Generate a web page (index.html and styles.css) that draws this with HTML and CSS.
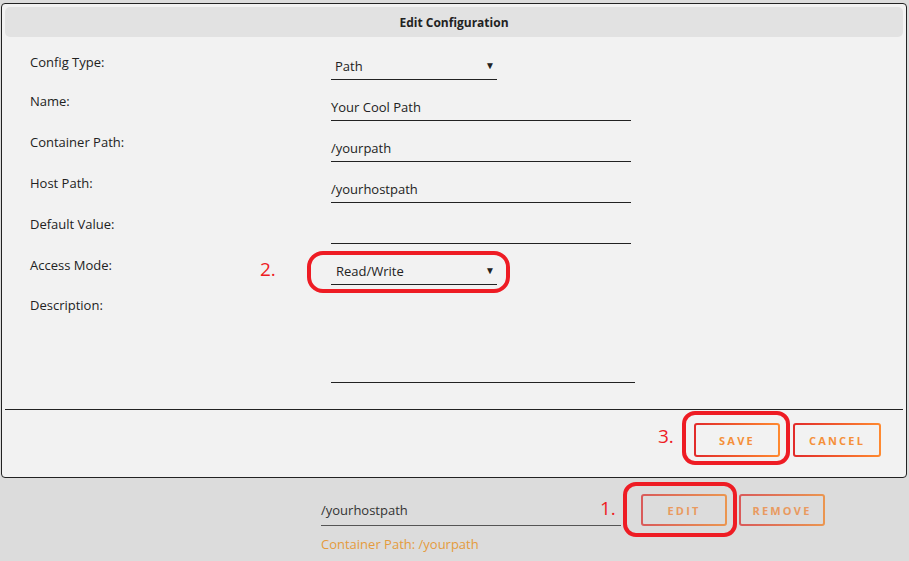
FILE: index.html
```html
<!DOCTYPE html>
<html lang="en">
<head>
    <meta charset="UTF-8">
    <title>Edit Configuration</title>
    <link rel="stylesheet" href="styles.css">
</head>
<body>
    <div class="page">
        <div class="modal">
            <div class="modal-header">Edit Configuration</div>

            <div class="form">
                <div class="form-row">
                    <label class="form-label">Config Type:</label>
                    <div class="select short">
                        <span>Path</span>
                        <span class="arrow">&#9660;</span>
                    </div>
                </div>
                <div class="form-row">
                    <label class="form-label">Name:</label>
                    <div class="text-input">Your Cool Path</div>
                </div>
                <div class="form-row">
                    <label class="form-label">Container Path:</label>
                    <div class="text-input">/yourpath</div>
                </div>
                <div class="form-row">
                    <label class="form-label">Host Path:</label>
                    <div class="text-input">/yourhostpath</div>
                </div>
                <div class="form-row">
                    <label class="form-label">Default Value:</label>
                    <div class="text-input"></div>
                </div>
                <div class="form-row">
                    <label class="form-label">Access Mode:</label>
                    <div class="select short indent">
                        <span>Read/Write</span>
                        <span class="arrow">&#9660;</span>
                    </div>
                </div>
                <div class="form-row desc-row">
                    <label class="form-label">Description:</label>
                    <div class="textarea"></div>
                </div>
            </div>

            <div class="modal-footer">
                <button class="grad-btn save-btn">SAVE</button>
                <button class="grad-btn cancel-btn">CANCEL</button>
            </div>
        </div>

        <div class="path-entry">
            <div class="entry-line">
                <div class="entry-input">/yourhostpath</div>
                <button class="grad-btn small-btn edit-btn">EDIT</button>
                <button class="grad-btn small-btn">REMOVE</button>
            </div>
            <div class="entry-note">Container Path: /yourpath</div>
        </div>

        <!-- annotations drawn over the screenshot -->
        <span class="step-num step-1">1.</span>
        <span class="step-num step-2">2.</span>
        <span class="step-num step-3">3.</span>
        <div class="step-ring ring-1"></div>
        <div class="step-ring ring-2"></div>
        <div class="step-ring ring-3"></div>
    </div>
</body>
</html>
```

FILE: styles.css
```css
* {
    margin: 0;
    padding: 0;
    box-sizing: border-box;
}

body {
    background: #dcdcdc;
    font-family: "Open Sans", "Noto Sans", sans-serif;
    font-size: 13px;
    color: #222;
}

.page {
    position: relative;
    width: 909px;
    height: 561px;
    padding-top: 3px;
}

.modal {
    margin-left: 1px;
    width: 906px;
    height: 475px;
    background: #f2f2f2;
    border: 1px solid #222;
    border-radius: 4px;
    padding: 3px;
}

.modal-header {
    height: 30px;
    line-height: 31px;
    background: #e2e2e2;
    border-radius: 5px;
    text-align: center;
    font-weight: bold;
    font-size: 12px;
    color: #222;
}

.form {
    padding: 9px 0 0 25px;
}

.form-row {
    display: grid;
    grid-template-columns: 301px auto;
    height: 41px;
}

.form-row:first-child .form-label {
    padding-top: 6px;
}

.form-label {
    display: block;
    padding-top: 4px;
    line-height: 20px;
    color: #222;
}

.text-input,
.select,
.textarea {
    margin-top: 8px;
    height: 26px;
    line-height: 24px;
    border-bottom: 1px solid #222;
    width: 300px;
}

.select {
    display: flex;
    justify-content: space-between;
    padding: 0 2px 0 4px;
}

.select.short {
    width: 166px;
}

.select.indent {
    padding-left: 5px;
}

.arrow {
    font-size: 10px;
    line-height: 22px;
}

.desc-row {
    height: 103px;
}

.desc-row .form-label {
    padding-top: 3px;
}

.textarea {
    margin-top: 8px;
    height: 83px;
    width: 304px;
}

.modal-footer {
    margin-top: 14px;
    border-top: 1px solid #222;
    display: flex;
    justify-content: flex-end;
    gap: 13px;
    padding: 13px 22px 0 0;
}

.grad-btn {
    height: 34px;
    width: 86px;
    font-family: "Open Sans", "Noto Sans", sans-serif;
    font-size: 11px;
    font-weight: bold;
    letter-spacing: 2.2px;
    border: 2px solid transparent;
    border-radius: 3px;
    background: linear-gradient(#f2f2f2, #f2f2f2) padding-box,
                linear-gradient(90deg, #e22a2a, #ff8a30) border-box;
    color: #ff8a30;
}

.save-btn {
    width: 86px;
    color: #f5903a;
}

.cancel-btn {
    width: 88px;
    color: #f5903a;
}

.path-entry {
    padding: 16px 0 0 321px;
}

.entry-line {
    display: flex;
    align-items: center;
}

.entry-input {
    flex: none;
    width: 300px;
    height: 30px;
    line-height: 28px;
    border-bottom: 1px solid #555;
    color: #333;
    margin-top: 1px;
}

.small-btn {
    flex: none;
    height: 32px;
    width: 86px;
    background: linear-gradient(#dcdcdc, #dcdcdc) padding-box,
                linear-gradient(90deg, #d95a5a, #eb9650) border-box;
    color: #e99a60;
}

.edit-btn {
    margin-left: 20px;
    margin-right: 12px;
}

.entry-note {
    margin-top: 9px;
    color: #e49b3c;
}

.step-num {
    position: absolute;
    color: #ee1c24;
    font-size: 19px;
    line-height: 20px;
}

.step-1 {
    left: 600px;
    top: 498px;
}

.step-2 {
    left: 260px;
    top: 259px;
}

.step-3 {
    left: 658px;
    top: 426px;
}

.step-ring {
    position: absolute;
    border: 4px solid #ee1c24;
    border-radius: 13px;
}

.ring-1 {
    left: 623px;
    top: 482px;
    width: 114px;
    height: 55px;
}

.ring-2 {
    left: 307px;
    top: 251px;
    width: 203px;
    height: 42px;
    border-radius: 16px;
}

.ring-3 {
    left: 682px;
    top: 411px;
    width: 108px;
    height: 54px;
}
```
